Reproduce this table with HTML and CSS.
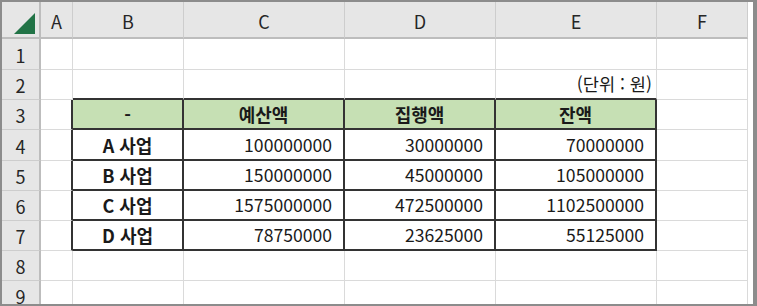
FILE: index.html
```html
<!DOCTYPE html>
<html lang="ko">
<head>
<meta charset="utf-8">
<link rel="stylesheet" href="styles.css">
</head>
<body>
<div class="frame">
  <div class="sheet">
    <div class="corner hd rh"><svg class="tri" width="22" height="21" viewBox="0 0 22 21"><polygon points="21,0 21,21 0,21" fill="#217346"/></svg></div>
    <div class="hd ch">A</div>
    <div class="hd ch">B</div>
    <div class="hd ch">C</div>
    <div class="hd ch">D</div>
    <div class="hd ch">E</div>
    <div class="hd ch">F</div>
    <div class="hd ch gap"></div>

    <div class="hd rh">1</div>
    <div class="c"></div><div class="c"></div><div class="c"></div><div class="c"></div><div class="c"></div><div class="c"></div><div class="c gap"></div>

    <div class="hd rh">2</div>
    <div class="c"></div><div class="c tt"></div><div class="c tt"></div><div class="c tt"></div><div class="c tt num unit">(단위 : 원)</div><div class="c"></div><div class="c gap"></div>

    <div class="hd rh">3</div>
    <div class="c tl"></div><div class="c tb th">-</div><div class="c tb th">예산액</div><div class="c tb th">집행액</div><div class="c tb th">잔액</div><div class="c"></div><div class="c gap"></div>

    <div class="hd rh">4</div>
    <div class="c tl"></div><div class="c tb lab">A 사업</div><div class="c tb num">100000000</div><div class="c tb num">30000000</div><div class="c tb num">70000000</div><div class="c"></div><div class="c gap"></div>

    <div class="hd rh">5</div>
    <div class="c tl"></div><div class="c tb lab">B 사업</div><div class="c tb num">150000000</div><div class="c tb num">45000000</div><div class="c tb num">105000000</div><div class="c"></div><div class="c gap"></div>

    <div class="hd rh">6</div>
    <div class="c tl"></div><div class="c tb lab">C 사업</div><div class="c tb num">1575000000</div><div class="c tb num">472500000</div><div class="c tb num">1102500000</div><div class="c"></div><div class="c gap"></div>

    <div class="hd rh">7</div>
    <div class="c tl"></div><div class="c tb lab">D 사업</div><div class="c tb num">78750000</div><div class="c tb num">23625000</div><div class="c tb num">55125000</div><div class="c"></div><div class="c gap"></div>

    <div class="hd rh">8</div>
    <div class="c"></div><div class="c"></div><div class="c"></div><div class="c"></div><div class="c"></div><div class="c"></div><div class="c gap"></div>

    <div class="hd rh">9</div>
    <div class="c"></div><div class="c"></div><div class="c"></div><div class="c"></div><div class="c"></div><div class="c"></div><div class="c gap"></div>
  </div>
</div>
</body>
</html>
```
FILE: styles.css
```css
* { box-sizing: border-box; }
html, body { margin: 0; padding: 0; background: #ffffff; }
body {
  font-family: "Noto Sans CJK KR", "Noto Sans", sans-serif;
  color: #1a1a1a;
}
.frame {
  width: 757px;
  height: 306px;
  border-style: solid;
  border-color: #8c8c8c;
  border-width: 2px 4px 2px 2px;
  overflow: hidden;
  background: #ffffff;
}
.sheet {
  display: grid;
  grid-template-columns: 39px 32px 111px 161px 151px 161px 91px 5px;
  grid-template-rows: 37px 31px 30px 30px 31px 30px 30px 30px 30px 30px;
  font-size: 17.6px;
}
.sheet > div {
  border-right: 1px solid #dadada;
  border-bottom: 1px solid #dadada;
  display: flex;
  align-items: center;
  min-width: 0;
  white-space: nowrap;
  line-height: 1;
}
.hd {
  background: #e6e6e6;
  color: #262626;
  justify-content: center;
  font-size: 18px;
}
.sheet > .ch {
  border-bottom: 2px solid #bdbdbd;
  border-right: 1px solid #cdcdcd;
  padding-top: 2px;
}
.sheet > .rh {
  border-right: 2px solid #bdbdbd;
  border-bottom: 1px solid #cdcdcd;
  padding-top: 1px;
}
.sheet > .corner {
  border-bottom: 2px solid #bdbdbd;
  justify-content: flex-end;
  align-items: flex-end;
  padding: 0 3px 3px 0;
}
.tri { display: block; }
.sheet > .gap {
  border-right: none;
  background: #ffffff;
}
.sheet > .ch.gap {
  border-right: none;
  border-bottom: none;
  background: #ffffff;
}
.sheet > .c.gap { border-bottom: none; }
.sheet > .tt { border-bottom: 2px solid #333333; }
.sheet > .tl { border-right: 2px solid #333333; }
.sheet > .tb {
  border-right: 2px solid #333333;
  border-bottom: 2px solid #333333;
}
.th {
  background: #c6e0b4;
  justify-content: center;
  font-weight: 700;
  font-size: 18px;
}
.lab {
  justify-content: center;
  font-weight: 700;
  font-size: 18px;
}
.num {
  justify-content: flex-end;
  padding-right: 11px;
}
.unit { padding-right: 4px; }
```
